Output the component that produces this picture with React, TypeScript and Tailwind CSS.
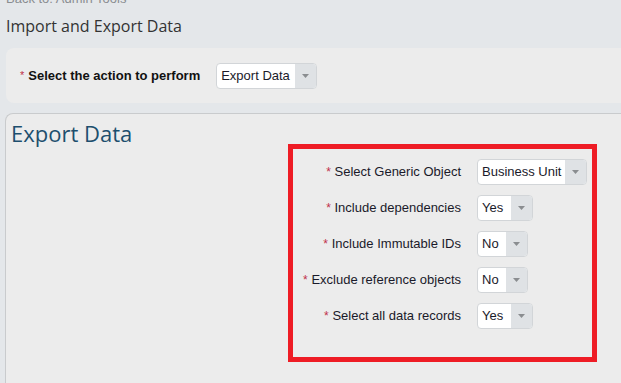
import * as React from 'react';

type Field = { label: string; value: string; width: string };

const fields: Field[] = [
  { label: 'Select Generic Object', value: 'Business Unit', width: 'w-[110px]' },
  { label: 'Include dependencies', value: 'Yes', width: 'w-[56px]' },
  { label: 'Include Immutable IDs', value: 'No', width: 'w-[51px]' },
  { label: 'Exclude reference objects', value: 'No', width: 'w-[51px]' },
  { label: 'Select all data records', value: 'Yes', width: 'w-[56px]' },
];

function Select({ value, width }: { value: string; width: string }) {
  return (
    <div
      className={`flex h-[26px] ${width} overflow-hidden rounded-[4px] border border-[#d2d5d8] bg-white`}
    >
      <span className="flex flex-1 items-center pl-[4px] text-[13px] text-[#1a1a2a]">{value}</span>
      <span className="flex w-[21px] items-center justify-center bg-[#dfe2e5]">
        <svg width="7" height="4" viewBox="0 0 7 4">
          <path d="M0 0 L7 0 L3.5 4 Z" fill="#8a8d90" />
        </svg>
      </span>
    </div>
  );
}

export default function App() {
  return (
    <div className="h-[383px] w-[621px] overflow-hidden bg-[#e4e7ea] font-['Liberation_Sans',Arial,sans-serif]">
      <div className="-mt-[9px] pl-[6px] text-[13px] leading-[15px] text-[#8a8d91]">Back to: Admin Tools</div>
      <h1 className="mt-[10px] pl-[6px] font-['Open_Sans',sans-serif] text-[16px] leading-[20px] text-[#333]">
        Import and Export Data
      </h1>

      <div className="ml-[6px] mt-[12px] flex h-[55px] items-center rounded-l-[8px] bg-[#ececec] pl-[14px]">
        <span className="text-[11px] text-[#c0304a]">*</span>
        <span className="ml-[4px] text-[13px] font-bold text-[#111]">Select the action to perform</span>
        <div className="ml-[16px]">
          <Select value="Export Data" width="w-[101px]" />
        </div>
      </div>

      <div className="ml-[5px] mt-[10px] h-[300px] rounded-tl-[8px] border-l border-t border-[#c9cbcd] bg-[#ececec]">
        <h2 className="pl-[5px] pt-[4px] font-['Open_Sans',sans-serif] text-[22px] leading-[30px] text-[#1d4f6e]">
          Export Data
        </h2>
        <div className="ml-[282px] -mt-[4px] w-[309px] border-[5px] border-[#ee1c25] pb-[28px] pt-[10px]">
          <div className="flex flex-col gap-[10px]">
            {fields.map((f) => (
              <div key={f.label} className="flex items-center">
                <div className="w-[168px] text-right text-[13px] text-[#1a1a2a]">
                  <span className="text-[12px] text-[#c0304a]">*</span> {f.label}
                </div>
                <div className="ml-[16px]">
                  <Select value={f.value} width={f.width} />
                </div>
              </div>
            ))}
          </div>
        </div>
      </div>
    </div>
  );
}
